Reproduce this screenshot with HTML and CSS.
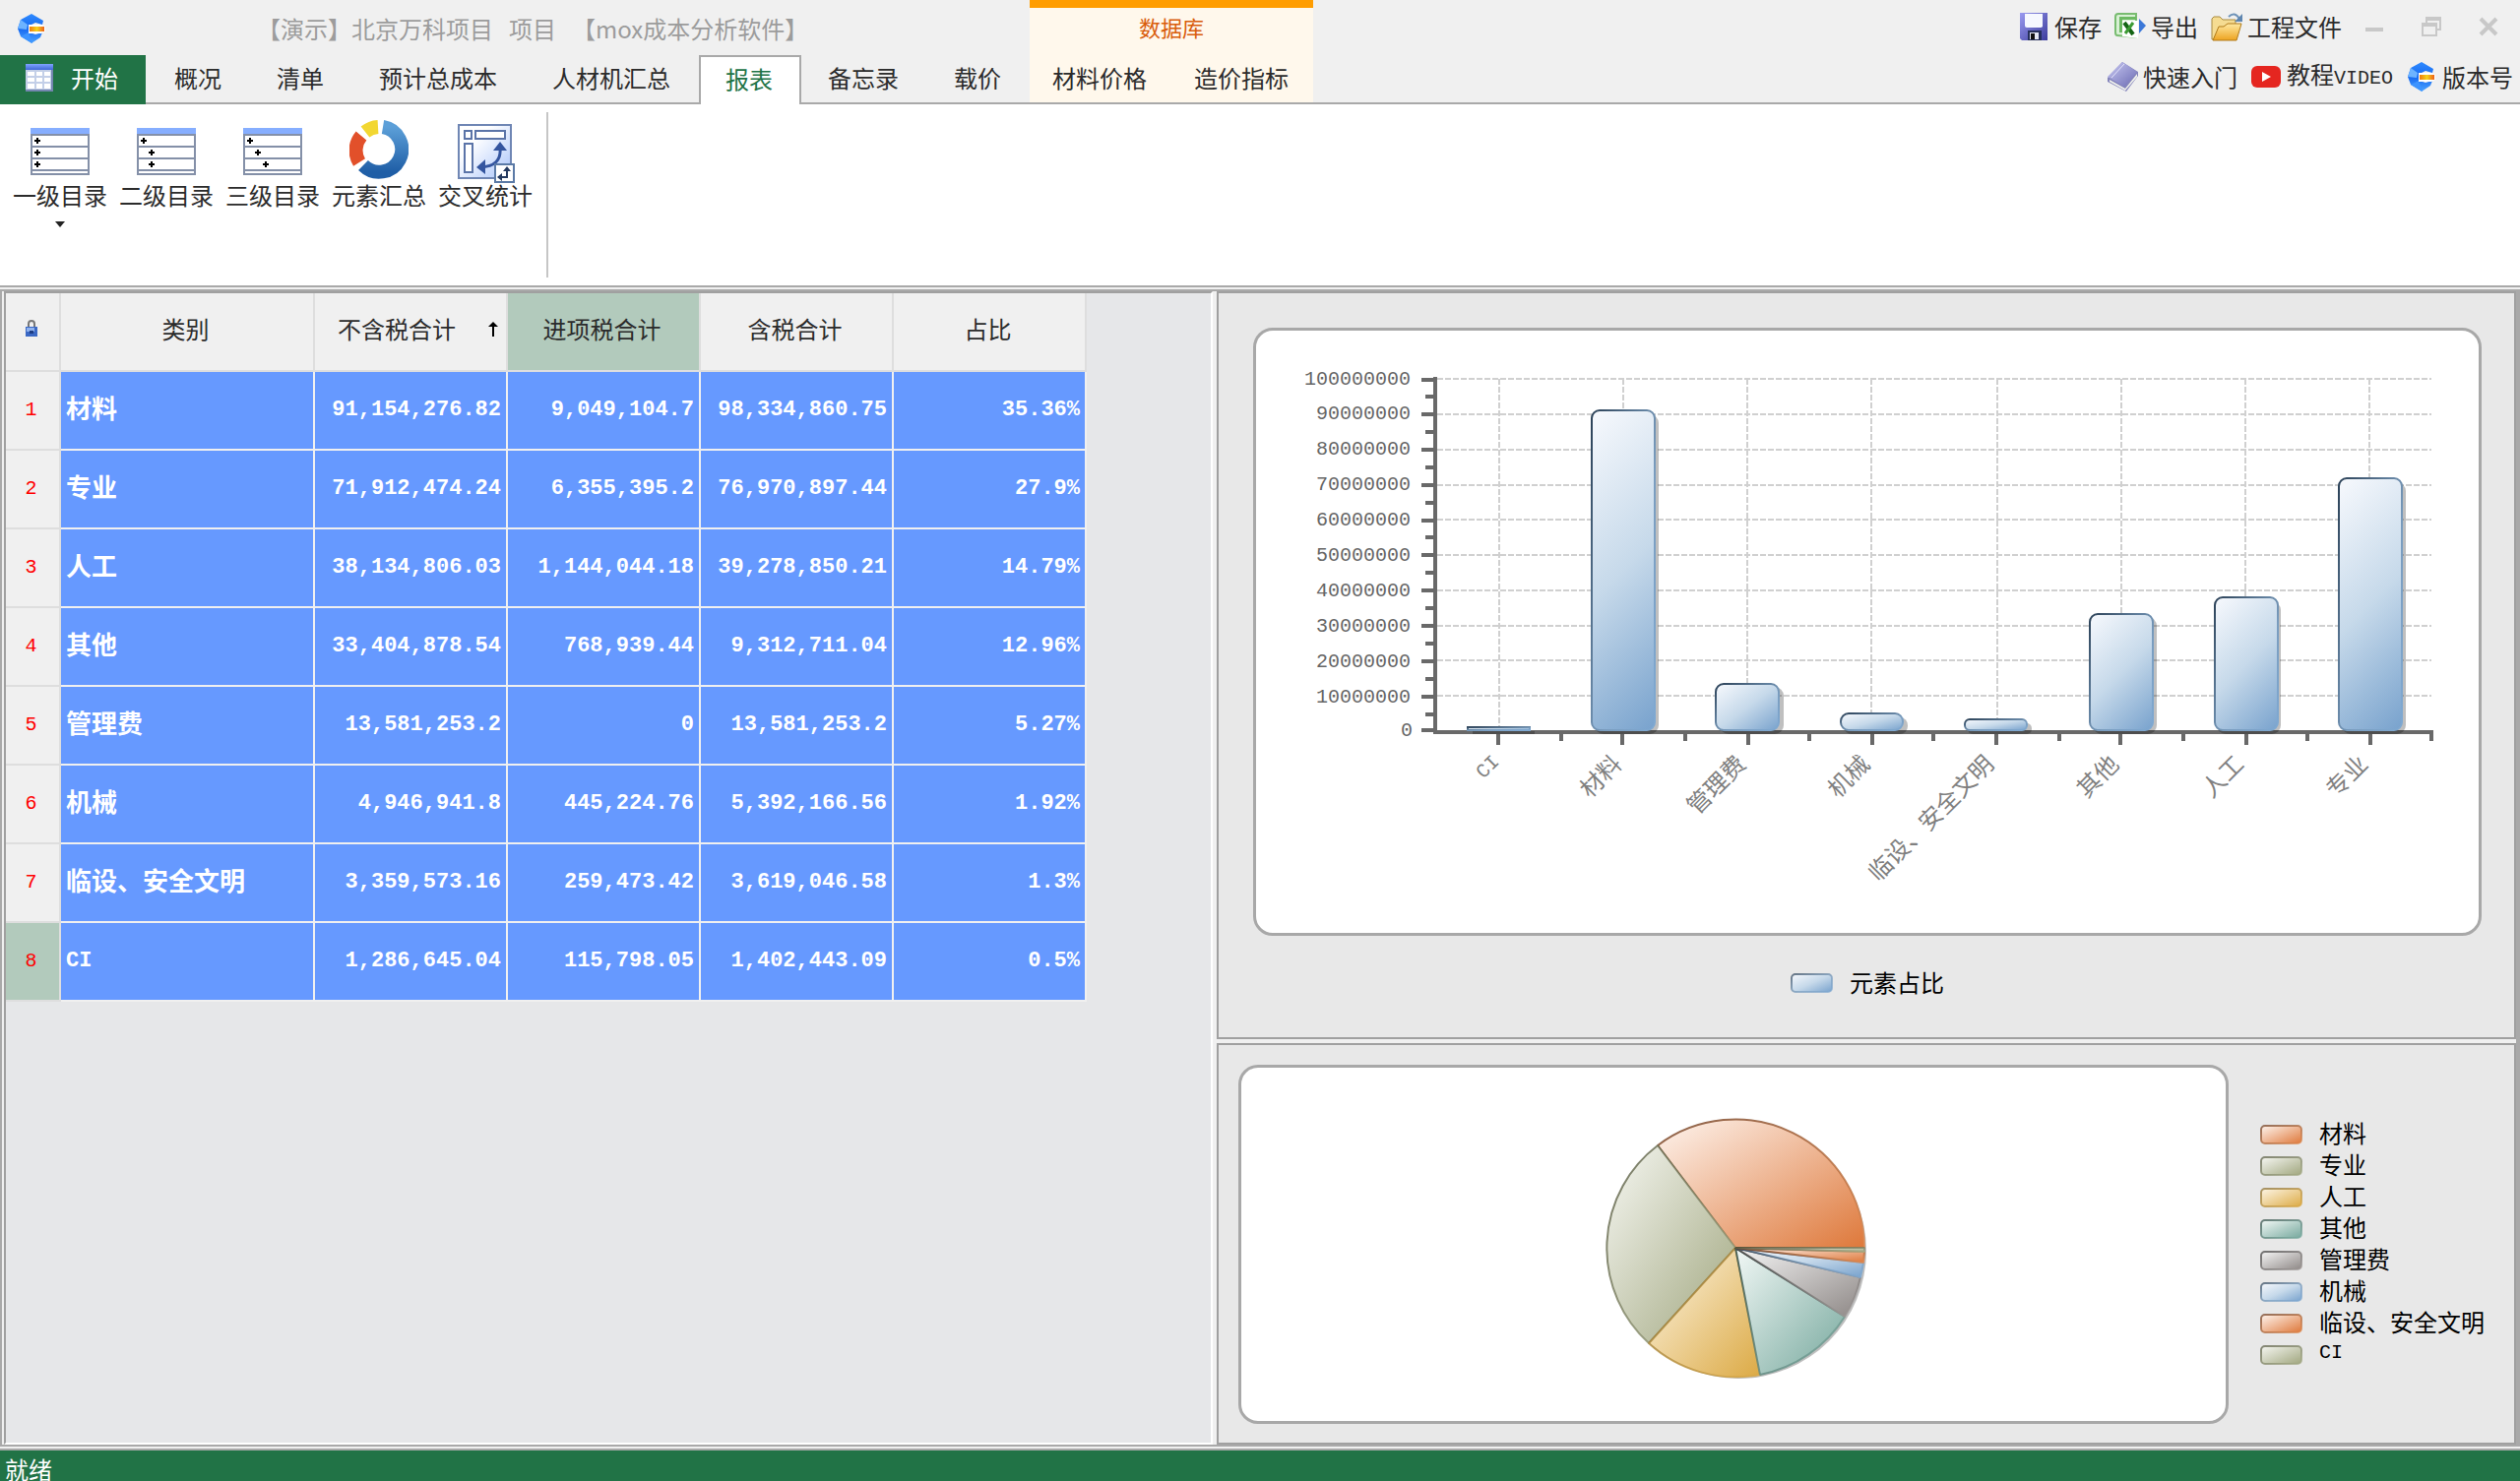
FILE: index.html
```html
<!DOCTYPE html>
<html lang="zh-CN">
<head>
<meta charset="utf-8">
<title>mox成本分析软件</title>
<link rel="stylesheet" href="styles.css">
</head>
<body>
<svg class="defs" width="0" height="0" aria-hidden="true">
  <defs>
    <linearGradient id="f-orange" x1="0" y1="0" x2="1" y2="1"><stop offset="0" stop-color="#fef4ee"/><stop offset="1" stop-color="#de783a"/></linearGradient>
    <linearGradient id="f-olive" x1="0" y1="0" x2="1" y2="1"><stop offset="0" stop-color="#f6f7f2"/><stop offset="1" stop-color="#a0a67e"/></linearGradient>
    <linearGradient id="f-yellow" x1="0" y1="0" x2="1" y2="1"><stop offset="0" stop-color="#fdf6e6"/><stop offset="1" stop-color="#dcaa45"/></linearGradient>
    <linearGradient id="f-teal" x1="0" y1="0" x2="1" y2="1"><stop offset="0" stop-color="#f2f8f6"/><stop offset="1" stop-color="#76a89d"/></linearGradient>
    <linearGradient id="f-gray" x1="0" y1="0" x2="1" y2="1"><stop offset="0" stop-color="#f5f5f5"/><stop offset="1" stop-color="#8e8886"/></linearGradient>
    <linearGradient id="f-blue" x1="0" y1="0" x2="1" y2="1"><stop offset="0" stop-color="#f7f9fd"/><stop offset=".5" stop-color="#c6d9ea"/><stop offset="1" stop-color="#78a2cd"/></linearGradient>
    <linearGradient id="bar-91" href="#f-blue" x1="0" y1="0" x2=".227" y2="1.152"/>
    <linearGradient id="bar-72" href="#f-blue" x1="0" y1="0" x2=".294" y2="1.176"/>
    <linearGradient id="bar-38" href="#f-blue" x1="0" y1="0" x2=".57" y2="1.204"/>
    <linearGradient id="bar-33" href="#f-blue" x1="0" y1="0" x2=".644" y2="1.192"/>
    <linearGradient id="s-orange" x1="0" y1="0" x2="1" y2="1"><stop offset="0" stop-color="#6e3a1c"/><stop offset="1" stop-color="#e08a50"/></linearGradient>
    <linearGradient id="s-olive" x1="0" y1="0" x2="1" y2="1"><stop offset="0" stop-color="#55583f"/><stop offset="1" stop-color="#a7ad88"/></linearGradient>
    <linearGradient id="s-yellow" x1="0" y1="0" x2="1" y2="1"><stop offset="0" stop-color="#866a2c"/><stop offset="1" stop-color="#dcaa45"/></linearGradient>
    <linearGradient id="s-teal" x1="0" y1="0" x2="1" y2="1"><stop offset="0" stop-color="#2e4a44"/><stop offset="1" stop-color="#7fb0a5"/></linearGradient>
    <linearGradient id="s-gray" x1="0" y1="0" x2="1" y2="1"><stop offset="0" stop-color="#3c3a3a"/><stop offset="1" stop-color="#a29c9a"/></linearGradient>
    <linearGradient id="s-blue" x1="0" y1="0" x2="1" y2="1"><stop offset="0" stop-color="#2c4258"/><stop offset=".6" stop-color="#7a9dbf"/><stop offset="1" stop-color="#7fa9d2"/></linearGradient>
    <linearGradient id="i-violet" x1="0" y1="0" x2="1" y2="1"><stop offset="0" stop-color="#9a9af0"/><stop offset="1" stop-color="#3c3c9c"/></linearGradient>
    <linearGradient id="i-book" x1="0" y1="0" x2="1" y2="1"><stop offset="0" stop-color="#c9c9f2"/><stop offset="1" stop-color="#6c6cb4"/></linearGradient>
    <linearGradient id="i-gold" x1="0" y1="0" x2="0" y2="1"><stop offset="0" stop-color="#ffe9a0"/><stop offset="1" stop-color="#eda320"/></linearGradient>
    <linearGradient id="i-logo" x1="0" y1="0" x2="0" y2="1"><stop offset="0" stop-color="#2f8bff"/><stop offset=".5" stop-color="#1668f0"/><stop offset="1" stop-color="#4ba3ff"/></linearGradient>
    <linearGradient id="i-bar" x1="0" y1="0" x2="1" y2="0"><stop offset="0" stop-color="#f07a10"/><stop offset=".5" stop-color="#f4d21c"/><stop offset="1" stop-color="#ee6018"/></linearGradient>
    <linearGradient id="i-ring" x1="0" y1="0" x2="0" y2="1"><stop offset="0" stop-color="#5c9fd8"/><stop offset="1" stop-color="#1f5ea6"/></linearGradient>
    <linearGradient id="i-pane" x1="0" y1="0" x2="1" y2="1"><stop offset=".3" stop-color="#ffffff"/><stop offset="1" stop-color="#a9c4fa"/></linearGradient>
    <linearGradient id="i-head" x1="0" y1="0" x2="0" y2="1"><stop offset="0" stop-color="#7fa4ff"/><stop offset="1" stop-color="#3f68d8"/></linearGradient>
    <symbol id="logo" viewBox="0 0 28 32">
      <path d="M14 1 26 8 25 12 18 10 12 13v7l6 2 7-2-2 5-9 6L3 24 0 16 3 7z" fill="url(#i-logo)"/>
      <path d="M3 7l7 5-1 5-9-1z" fill="#6db3ff"/><path d="M3 24l8-4 4 11z" fill="#3d94ff"/>
      <path d="M11 12h13l4 2v5l-4 2H11z" fill="#ffffff"/>
      <path d="M12 14h15v5H12z" fill="url(#i-bar)"/>
    </symbol>
    <symbol id="sheet" viewBox="0 0 60 48">
      <path d="M1 7h58v40H1z" fill="#fff" stroke="#8490a8" stroke-width="2"/>
      <path d="M0 0h60v6H0z" fill="#86aeff"/>
      <path d="M0 19h60M0 31h60M0 43h60" stroke="#8490a8" stroke-width="2"/>
    </symbol>
    <path id="plus" d="M-3 0h6M0-3v6" stroke="#000" stroke-width="2"/>
  </defs>
</svg>

<header class="header">
  <div class="titlebar">
    <svg class="logo" width="28" height="32"><use href="#logo"/></svg>
    <h1 class="title"><span>【演示】北京万科项目</span><span>项目</span><span>【mox成本分析软件】</span></h1>
  </div>
  <div class="context-title">数据库</div>
  <div class="actions">
    <button class="tool" type="button">
      <svg width="32" height="32" viewBox="0 0 32 32"><path d="M2 2h28v28H4l-2-2z" fill="url(#i-violet)"/><path d="M7 3h18v13q-1 1-2 1H9q-2 0-2-2z" fill="#f6f8ff"/><path d="M10 20h14v10H10z" fill="#26305c"/><path d="M12 22h9v7h-9z" fill="#e4e8f4"/><path d="M13 23h4v6h-4z" fill="#111"/></svg>
      <span>保存</span>
    </button>
    <button class="tool" type="button">
      <svg width="32" height="32" viewBox="0 0 32 32"><path d="M4 3h18v24L3 25q-2 0-2-3V6q0-3 3-3z" fill="#d8f0d4" stroke="#78bc70" stroke-width="2"/><path d="M5 6h17v3H8v13H5z" fill="#6cba62"/><path d="M8 10h16v18l-16-2z" fill="#fff"/><path d="M10 12l9 12" stroke="#146414" stroke-width="4"/><path d="M19 12l-8 11" stroke="#3c9a34" stroke-width="3"/><path d="M25 8l7 7-7 8z" fill="#3c78d8"/></svg>
      <span>导出</span>
    </button>
    <button class="tool" type="button">
      <svg width="32" height="32" viewBox="0 0 32 32"><path d="M1 29V8l2-2h6l3 3h13v20z" fill="#f5dc92" stroke="#a88a40"/><path d="M2 30l6-14h5l4-3h14l-5 17z" fill="url(#i-gold)" stroke="#b07a18"/><path d="M18 6q6-6 11 2" fill="none" stroke="#6f93b8" stroke-width="2"/><path d="M32 3v8h-8z" fill="#5f86b0"/></svg>
      <span>工程文件</span>
    </button>
    <div class="window-buttons">
      <button type="button" aria-label="最小化"><svg width="20" height="20"><path d="M1 13h18" stroke="#c8c8c8" stroke-width="4"/></svg></button>
      <button type="button" aria-label="还原"><svg width="20" height="20" fill="none" stroke="#c8c8c8" stroke-width="2"><path d="M1 7h14v12H1zM1 9h14M5 6V1h14v12h-4M5 3h14"/></svg></button>
      <button type="button" aria-label="关闭"><svg width="20" height="20"><path d="M2 2l16 16M18 2L2 18" stroke="#c8c8c8" stroke-width="4"/></svg></button>
    </div>
  </div>
  <nav class="tabs">
    <button class="tab tab-start" type="button">
      <svg width="28" height="28" viewBox="0 0 28 28"><path d="M0 0h28v27H0z" fill="#c3cfe8"/><path d="M0 0h28v6H0z" fill="url(#i-head)"/><path d="M2 8h7v4H2zM11 8h6v4h-6zM19 8h6v4h-6zM2 14h7v4H2zM11 14h6v4h-6zM19 14h6v4h-6zM2 20h7v5H2zM11 20h6v5h-6zM19 20h6v5h-6z" fill="#fff"/><path d="M0 26h28v2H0zM26 6h2v22h-2z" fill="#7486b0"/></svg>
      <span>开始</span>
    </button>
    <button class="tab" type="button">概况</button>
    <button class="tab" type="button">清单</button>
    <button class="tab" type="button">预计总成本</button>
    <button class="tab" type="button">人材机汇总</button>
    <button class="tab tab-active" type="button">报表</button>
    <button class="tab" type="button">备忘录</button>
    <button class="tab" type="button">载价</button>
  </nav>
  <nav class="tabs context-tabs">
    <button class="tab" type="button">材料价格</button>
    <button class="tab" type="button">造价指标</button>
  </nav>
  <div class="links">
    <button class="tool" type="button">
      <svg width="32" height="32" viewBox="0 0 32 32"><path d="M1 17L16 1l16 10v4L20 31 1 21z" fill="#8484bc"/><path d="M3 19l16 9L31 13v3L19 30 3 21z" fill="#f2f4ec"/><path d="M1 16L16 1l15 10-13 15z" fill="url(#i-book)"/><path d="M5 17L18 3" stroke="#e4e4fa" stroke-width="1"/></svg>
      <span>快速入门</span>
    </button>
    <button class="tool" type="button">
      <svg width="32" height="32" viewBox="0 0 32 32"><rect x="1" y="5" width="30" height="22" rx="6" fill="#e52620"/><path d="M12 11v10l9-5z" fill="#fff"/></svg>
      <span>教程<span class="mono">VIDEO</span></span>
    </button>
    <button class="tool" type="button">
      <svg width="32" height="32"><use href="#logo"/></svg>
      <span>版本号</span>
    </button>
  </div>
</header>

<section class="ribbon">
  <div class="ribbon-group">
    <button class="ribbon-button" type="button">
      <svg width="60" height="64" viewBox="0 -8 60 64"><use href="#sheet" width="60" height="48"/><use href="#plus" x="7" y="13"/><use href="#plus" x="7" y="25"/><use href="#plus" x="7" y="37"/></svg>
      <span>一级目录</span>
      <svg class="caret" width="10" height="6"><path d="M0 0h10L5 6z" fill="#222"/></svg>
    </button>
    <button class="ribbon-button" type="button">
      <svg width="60" height="64" viewBox="0 -8 60 64"><use href="#sheet" width="60" height="48"/><use href="#plus" x="7" y="13"/><use href="#plus" x="15" y="25"/><use href="#plus" x="15" y="37"/></svg>
      <span>二级目录</span>
    </button>
    <button class="ribbon-button" type="button">
      <svg width="60" height="64" viewBox="0 -8 60 64"><use href="#sheet" width="60" height="48"/><use href="#plus" x="7" y="13"/><use href="#plus" x="15" y="25"/><use href="#plus" x="23" y="37"/></svg>
      <span>三级目录</span>
    </button>
    <button class="ribbon-button" type="button">
      <svg width="60" height="64" viewBox="0 0 60 64"><g fill="none" stroke-width="14"><path d="M34 7A23 23 0 1 1 14 46" stroke="url(#i-ring)"/><path d="M10 43A23 23 0 0 1 12 16" stroke="#e2502a"/><path d="M16 12A23 23 0 0 1 29 7" stroke="#f2d732"/></g></svg>
      <span>元素汇总</span>
    </button>
    <button class="ribbon-button" type="button">
      <svg width="60" height="64" viewBox="0 0 60 64"><path d="M3 5h53v54H3z" fill="url(#i-pane)" stroke="#6f86b4" stroke-width="2"/><g fill="#fff" stroke="#5b74a8" stroke-width="2"><path d="M9 11h7v8H9zM20 11h30v8H20zM9 24h8v29H9z"/></g><path d="M45 28q2 19-20 20" fill="none" stroke="#34559f" stroke-width="3"/><path d="M38 31l7-9 7 9zM30 40l-9 8 9 7z" fill="#34559f"/><path d="M40 45h19v18H40z" fill="#fff" stroke="#5b7aa6" stroke-width="2"/><path d="M52 50v8h-7" fill="none" stroke="#24395f" stroke-width="2"/><path d="M48 52l4-5 4 5zM47 54l-5 4 5 4z" fill="#24395f"/></svg>
      <span>交叉统计</span>
    </button>
  </div>
</section>

<main class="workspace">
  <div class="frame">
    <section class="grid-pane">
      <table class="grid">
        <colgroup><col class="col-index"><col class="col-name"><col class="col-value"><col class="col-value"><col class="col-value"><col class="col-value"></colgroup>
        <thead>
          <tr>
            <th aria-label="锁定"><svg class="lock" width="12" height="18" viewBox="0 0 12 18"><path d="M3 7V4q0-3 3-3t3 3v3" fill="none" stroke="#777" stroke-width="2"/><path d="M0 7h12v10H0z" fill="#3a68c4"/><path d="M1 8h8v4H1z" fill="#8fb2ee"/><path d="M4 11h4v3H4z" fill="#1c3c84"/></svg></th>
            <th>类别</th>
            <th><span class="sorted">不含税合计<svg width="10" height="16"><path d="M5 2v14" stroke="#000" stroke-width="2"/><path d="M0 6l5-5 5 5z" fill="#000"/></svg></span></th>
            <th class="selected">进项税合计</th>
            <th>含税合计</th>
            <th>占比</th>
          </tr>
        </thead>
        <tbody>
          <tr><th>1</th><td>材料</td><td>91,154,276.82</td><td>9,049,104.7</td><td>98,334,860.75</td><td>35.36%</td></tr>
          <tr><th>2</th><td>专业</td><td>71,912,474.24</td><td>6,355,395.2</td><td>76,970,897.44</td><td>27.9%</td></tr>
          <tr><th>3</th><td>人工</td><td>38,134,806.03</td><td>1,144,044.18</td><td>39,278,850.21</td><td>14.79%</td></tr>
          <tr><th>4</th><td>其他</td><td>33,404,878.54</td><td>768,939.44</td><td>9,312,711.04</td><td>12.96%</td></tr>
          <tr><th>5</th><td>管理费</td><td>13,581,253.2</td><td>0</td><td>13,581,253.2</td><td>5.27%</td></tr>
          <tr><th>6</th><td>机械</td><td>4,946,941.8</td><td>445,224.76</td><td>5,392,166.56</td><td>1.92%</td></tr>
          <tr><th>7</th><td>临设、安全文明</td><td>3,359,573.16</td><td>259,473.42</td><td>3,619,046.58</td><td>1.3%</td></tr>
          <tr><th class="selected">8</th><td><span class="mono">CI</span></td><td>1,286,645.04</td><td>115,798.05</td><td>1,402,443.09</td><td>0.5%</td></tr>
        </tbody>
      </table>
    </section>

    <div class="charts">
      <section class="chart-pane bar-pane">
        <div class="card">
          <svg class="plot" viewBox="-184 -407 1242 612" role="img" aria-label="元素占比">
            <g class="gridlines">
              <path d="M0-358H1010M0-322H1010M0-286H1010M0-250H1010M0-215H1010M0-179H1010M0-143H1010M0-107H1010M0-72H1010M0-36H1010"/>
              <path d="M63-358V0M189-358V0M315-358V0M441-358V0M569-358V0M695-358V0M821-358V0M947-358V0"/>
            </g>
            <path class="axis" d="M-2-360V1M-4 1H1012"/>
            <path class="axis" d="M-16-357H-2M-16-322H-2M-16-286H-2M-16-250H-2M-16-214H-2M-16-179H-2M-16-143H-2M-16-107H-2M-16-71H-2M-16-35H-2M-16-1H-2"/>
            <path class="axis" d="M-12-340H-2M-12-304H-2M-12-268H-2M-12-232H-2M-12-197H-2M-12-161H-2M-12-125H-2M-12-89H-2M-12-53H-2M-12-17H-2"/>
            <path class="axis" d="M62 1V14M188 1V14M316 1V14M442 1V14M568 1V14M694 1V14M822 1V14M948 1V14M126 1V10M252 1V10M378 1V10M504 1V10M632 1V10M758 1V10M884 1V10M1010 1V10"/>
            <g class="bar-shadow">
              <rect x="36" y="0" width="63" height="3"/>
              <rect x="160" y="-322" width="65" height="325" rx="9"/>
              <rect x="287" y="-45" width="65" height="48" rx="9"/>
              <rect x="413" y="-14" width="65" height="17" rx="8"/>
              <rect x="539" y="-8" width="65" height="11" rx="5"/>
              <rect x="666" y="-116" width="65" height="119" rx="9"/>
              <rect x="792" y="-132" width="65" height="135" rx="9"/>
              <rect x="919" y="-253" width="65" height="256" rx="9"/>
            </g>
            <g class="bar">
              <rect x="31" y="-4" width="63" height="3"/>
              <rect x="157" y="-326" width="64" height="325" rx="8" fill="url(#bar-91)"/>
              <rect x="283" y="-48" width="64" height="47" rx="8"/>
              <rect x="410" y="-18" width="63" height="17" rx="8"/>
              <rect x="536" y="-12" width="63" height="11" rx="5"/>
              <rect x="663" y="-119" width="64" height="118" rx="8" fill="url(#bar-33)"/>
              <rect x="790" y="-136" width="64" height="135" rx="8" fill="url(#bar-38)"/>
              <rect x="916" y="-257" width="64" height="256" rx="8" fill="url(#bar-72)"/>
            </g>
            <g class="scale">
              <text x="-27" y="-352">100000000</text>
              <text x="-27" y="-317">90000000</text>
              <text x="-27" y="-281">80000000</text>
              <text x="-27" y="-245">70000000</text>
              <text x="-27" y="-209">60000000</text>
              <text x="-27" y="-173">50000000</text>
              <text x="-27" y="-137">40000000</text>
              <text x="-27" y="-101">30000000</text>
              <text x="-27" y="-65">20000000</text>
              <text x="-27" y="-29">10000000</text>
              <text x="-25" y="5">0</text>
            </g>
            <g class="categories">
              <text class="mono" transform="translate(64 32) rotate(-45)">CI</text>
              <text transform="translate(189 35) rotate(-45)">材料</text>
              <text transform="translate(315 35) rotate(-45)">管理费</text>
              <text transform="translate(441 35) rotate(-45)">机械</text>
              <text transform="translate(567 35) rotate(-45)">临设、安全文明</text>
              <text transform="translate(694 35) rotate(-45)">其他</text>
              <text transform="translate(821 35) rotate(-45)">人工</text>
              <text transform="translate(947 35) rotate(-45)">专业</text>
            </g>
          </svg>
        </div>
        <ul class="legend">
          <li><svg class="swatch" width="43" height="20"><rect x="1" y="1" width="41" height="18" rx="4" fill="url(#f-blue)" stroke="url(#s-blue)"/></svg><span>元素占比</span></li>
        </ul>
      </section>

      <section class="chart-pane pie-pane">
        <div class="card">
          <svg class="plot" viewBox="-502 -183 1000 359" role="img" aria-label="元素占比饼图">
            <circle class="pie-shadow" cx="3" cy="3" r="130"/>
            <g class="pie">
              <path d="M0 0L131 0A131 131 0 0 0-79-104z" fill="url(#f-orange)" stroke="url(#s-orange)"/>
              <path d="M0 0L-79-104A131 131 0 0 0-88 97z" fill="url(#f-olive)" stroke="url(#s-olive)"/>
              <path d="M0 0L-88 97A131 131 0 0 0 25 129z" fill="url(#f-yellow)" stroke="url(#s-yellow)"/>
              <path d="M0 0L25 129A131 131 0 0 0 111 70z" fill="url(#f-teal)" stroke="url(#s-teal)"/>
              <path d="M0 0L111 70A131 131 0 0 0 127 30z" fill="url(#f-gray)" stroke="url(#s-gray)"/>
              <path d="M0 0L127 30A131 131 0 0 0 130 15z" fill="url(#f-blue)" stroke="url(#s-blue)"/>
              <path d="M0 0L130 15A131 131 0 0 0 131 4z" fill="url(#f-orange)" stroke="url(#s-orange)"/>
              <path d="M0 0L131 4A131 131 0 0 0 131 0z" fill="url(#f-olive)" stroke="url(#s-olive)"/>
            </g>
          </svg>
        </div>
        <ul class="legend">
          <li><svg class="swatch" width="43" height="20"><rect x="1" y="1" width="41" height="18" rx="4" fill="url(#f-orange)" stroke="url(#s-orange)"/></svg><span>材料</span></li>
          <li><svg class="swatch" width="43" height="20"><rect x="1" y="1" width="41" height="18" rx="4" fill="url(#f-olive)" stroke="url(#s-olive)"/></svg><span>专业</span></li>
          <li><svg class="swatch" width="43" height="20"><rect x="1" y="1" width="41" height="18" rx="4" fill="url(#f-yellow)" stroke="url(#s-yellow)"/></svg><span>人工</span></li>
          <li><svg class="swatch" width="43" height="20"><rect x="1" y="1" width="41" height="18" rx="4" fill="url(#f-teal)" stroke="url(#s-teal)"/></svg><span>其他</span></li>
          <li><svg class="swatch" width="43" height="20"><rect x="1" y="1" width="41" height="18" rx="4" fill="url(#f-gray)" stroke="url(#s-gray)"/></svg><span>管理费</span></li>
          <li><svg class="swatch" width="43" height="20"><rect x="1" y="1" width="41" height="18" rx="4" fill="url(#f-blue)" stroke="url(#s-blue)"/></svg><span>机械</span></li>
          <li><svg class="swatch" width="43" height="20"><rect x="1" y="1" width="41" height="18" rx="4" fill="url(#f-orange)" stroke="url(#s-orange)"/></svg><span>临设、安全文明</span></li>
          <li><svg class="swatch" width="43" height="20"><rect x="1" y="1" width="41" height="18" rx="4" fill="url(#f-olive)" stroke="url(#s-olive)"/></svg><span class="mono">CI</span></li>
        </ul>
      </section>
    </div>
  </div>
</main>

<footer class="status">就绪</footer>
</body>
</html>
```

FILE: styles.css
```css
* { box-sizing: border-box; }

body {
  margin: 0;
  min-height: 100vh;
  display: flex;
  flex-direction: column;
  background: #f0f0f0;
  color: #2b2b2b;
  font: 24px/24px "Noto Sans CJK SC", sans-serif;
}

button {
  margin: 0;
  padding: 0;
  border: 0;
  background: none;
  color: inherit;
  font: inherit;
}

svg { display: block; flex: none; }
.defs { position: absolute; }

.mono { font-family: "Liberation Mono", monospace; font-size: 20px; }

/* Title bar and tabs */
.header {
  display: grid;
  grid-template-columns: auto auto 1fr;
  grid-template-rows: 56px 50px;
  box-shadow: inset 0 -2px #a9a9a9;
}

.titlebar { display: flex; align-items: center; padding: 2px 0 0 18px; }
.logo { margin-right: 215px; }
.title {
  display: flex;
  gap: 16px;
  margin: 0;
  color: #9c9c9c;
  font-size: 24px;
  font-weight: 400;
  white-space: nowrap;
}

.context-title {
  border-top: 8px solid #ff9d00;
  padding-top: 7px;
  background: #fff8ec;
  color: #d95d0c;
  font-size: 22px;
  text-align: center;
}

.actions, .links { display: flex; justify-content: flex-end; align-items: center; }
.actions { gap: 13px; padding: 0 3px 3px 0; }
.links { gap: 13px; padding: 0 7px 7px 0; }
.tool { display: flex; align-items: center; gap: 5px; white-space: nowrap; }
.window-buttons { display: flex; margin-left: -9px; }
.window-buttons button { display: flex; justify-content: center; width: 58px; }

.tabs { display: flex; }
.tab { padding: 0 29px 4px 27px; white-space: nowrap; }
.tab-start {
  display: flex;
  align-items: center;
  gap: 18px;
  margin-right: 2px;
  padding: 0 28px 4px 26px;
  background: #217346;
  color: #fff;
}
.tab-active {
  padding: 0 27px 4px 25px;
  border: 2px solid #a9a9a9;
  border-bottom: 0;
  background: #fff;
  color: #217346;
}
.context-tabs { height: 48px; background: #fff8ec; }
.context-tabs .tab { padding: 0 25px 2px 23px; }

/* Ribbon */
.ribbon { display: flex; height: 184px; padding: 8px 0; background: #fff; }
.ribbon-group { display: flex; padding: 8px 8px 0 7px; border-right: 2px solid #c6c6c6; }
.ribbon-button {
  display: flex;
  flex-direction: column;
  align-items: center;
  width: 108px;
}
.caret { margin-top: 15px; }

/* Workspace */
.workspace {
  flex: 1;
  display: flex;
  padding: 2px 0;
  border-top: 2px solid #a9a9a9;
  border-bottom: 2px solid #a9a9a9;
}
.frame {
  flex: 1;
  display: grid;
  grid-template-columns: 1228fr 1320fr;
  column-gap: 4px;
  padding-left: 2px;
  border: 2px solid #a9a9a9;
  border-right-width: 4px;
}

.grid-pane {
  min-width: 0;
  border: 2px solid #a0a0a0;
  border-right-color: #fff;
  border-bottom-color: #fff;
  background: #e6e7e9;
}
.grid { border-collapse: separate; border-spacing: 0; table-layout: fixed; width: 1098px; }
.col-index { width: 56px; }
.col-name { width: 258px; }
.col-value { width: 196px; }
.grid th, .grid td {
  height: 80px;
  padding: 0 5px 6px;
  border-right: 2px solid #f0f0f0;
  border-bottom: 2px solid #f0f0f0;
  white-space: nowrap;
}
.grid th { padding: 0 8px 7px 5px; border-color: #dedede; background: #f0f0f0; font-weight: 400; text-align: center; }
.lock { margin: 0 auto; }
.grid tbody th { padding: 0 3px 0 0; color: #f00; font-family: "Liberation Mono", monospace; font-size: 20px; }
.grid .selected { background: #b2cabc; }
.sorted { display: flex; align-items: center; justify-content: flex-end; gap: 33px; }
.grid td {
  background: #6699ff;
  color: #fff;
  font: bold 22px/24px "Liberation Mono", monospace;
  text-align: right;
}
.grid td:nth-child(n+3) { padding-bottom: 0; }
.grid td:nth-child(2) { font: bold 26px/26px "Noto Sans CJK SC", sans-serif; text-align: left; }
.grid td .mono { font-family: "Liberation Mono", monospace; font-size: 22px; }

/* Charts */
.charts { display: flex; flex-direction: column; gap: 4px; min-width: 0; }
.chart-pane { border: 2px solid #a0a0a0; background: #e8e8e8; color: #000; }
.bar-pane { flex: 1; padding: 35px 33px 0 35px; }
.pie-pane { display: flex; align-items: center; gap: 32px; padding: 20px 30px 19px 20px; }
.card { border: 3px solid #a8a8a8; border-radius: 20px; background: #fff; }
.pie-pane .card { flex: 1; }
.plot { width: 100%; height: auto; }

.legend { margin: 0; padding: 0; list-style: none; }
.legend li { display: flex; align-items: center; gap: 17px; height: 32px; }
.legend span { padding-bottom: 3px; }
.bar-pane .legend { display: flex; justify-content: center; padding: 32px 0 39px; }
.swatch { stroke-width: 2; stroke-opacity: .7; }

.gridlines { fill: none; stroke: #d0d0d0; stroke-width: 2; stroke-dasharray: 6 2; }
.axis { fill: none; stroke: #696969; stroke-width: 4; }
.bar rect { stroke: url(#s-blue); stroke-width: 2; }
.bar { fill: url(#f-blue); }
.bar-shadow { fill: rgba(0, 0, 0, .25); }
.pie { stroke-width: 2; stroke-linejoin: bevel; stroke-opacity: .8; }
.pie-shadow { fill: rgba(0, 0, 0, .25); }
.scale { fill: #666; font: 20px "Liberation Mono", monospace; text-anchor: end; }
.categories { fill: #808080; font-size: 24px; text-anchor: end; }

.status {
  height: 31px;
  padding: 7px 5px 0;
  overflow: hidden;
  background: #217346;
  color: #fff;
}
```
